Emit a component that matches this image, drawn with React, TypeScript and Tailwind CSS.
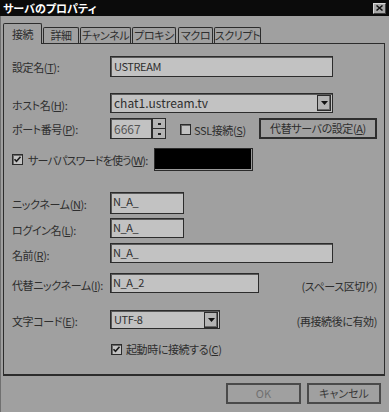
import React from "react";

const LBL = "text-[11px] leading-none text-[#2e2e2e] whitespace-nowrap tracking-[-0.4px]";

function Label({ children, className = "" }: { children: React.ReactNode; className?: string }) {
  return <div className={`${LBL} ${className}`}>{children}</div>;
}

function Check({ checked }: { checked?: boolean }) {
  return (
    <div className="w-[11px] h-[11px] shrink-0 bg-[#c2c2c2] border border-[#2c2c2c] shadow-[inset_1px_1px_0_#6a6a6a] flex items-center justify-center">
      {checked && (
        <svg width="9" height="9" viewBox="0 0 9 9">
          <path d="M1.5 4.2 L3.5 6.3 L7.5 1.8" stroke="#1a1a1a" strokeWidth="1.6" fill="none" />
        </svg>
      )}
    </div>
  );
}

function DropBtn() {
  return (
    <div className="w-[14px] h-[16px] shrink-0 bg-[#b4b4b4] border border-[#2c2c2c] shadow-[inset_-1px_-1px_0_#6a6a6a] flex items-center justify-center">
      <svg width="7" height="4" viewBox="0 0 7 4">
        <path d="M0 0 H7 L3.5 4 Z" fill="#111" />
      </svg>
    </div>
  );
}

export default function App() {
  return (
    <div className="w-[389px] h-[412px] bg-[#a0a0a0] overflow-hidden font-['Noto_Sans_CJK_JP',sans-serif] [font-feature-settings:'palt'] flex flex-col">
      {/* title bar */}
      <div className="h-[16px] bg-[#0b0b0b] flex items-center justify-between shrink-0">
        <span className="pl-[3px] text-[11px] font-bold text-white leading-none">サーバのプロパティ</span>
        <div className="mr-[3px] w-[13px] h-[11px] bg-[#a8a8a8] border border-[#d8d8d8] border-r-[#404040] border-b-[#404040] flex items-center justify-center">
          <svg width="7" height="6" viewBox="0 0 7 6">
            <path d="M0.5 0.5 L6.5 5.5 M6.5 0.5 L0.5 5.5" stroke="#111" strokeWidth="1.5" />
          </svg>
        </div>
      </div>

      {/* body */}
      <div className="flex-1 flex flex-col border-l border-[#707070] pl-[2px]">
        {/* tabs */}
        <div className="h-[27px] flex items-end shrink-0">
          <div className="relative z-10 mb-[-1px] w-[39px] h-[21px] bg-[#a0a0a0] border border-b-0 border-[#2c2c2c] rounded-t-[2px] flex items-end justify-center pb-[4px]">
            <span className={LBL}>接続</span>
          </div>
          <div className="ml-[1px] w-[36px] h-[16px] border border-b-0 border-[#2c2c2c] rounded-t-[2px] flex items-center justify-center">
            <span className={LBL}>詳細</span>
          </div>
          <div className="ml-[1px] w-[51px] h-[16px] border border-b-0 border-[#2c2c2c] rounded-t-[2px] flex items-center justify-center">
            <span className={LBL}>チャンネル</span>
          </div>
          <div className="ml-[1px] w-[44px] h-[16px] border border-b-0 border-[#2c2c2c] rounded-t-[2px] flex items-center justify-center">
            <span className={LBL}>プロキシ</span>
          </div>
          <div className="ml-[2px] w-[35px] h-[16px] border border-b-0 border-[#2c2c2c] rounded-t-[2px] flex items-center justify-center">
            <span className={LBL}>マクロ</span>
          </div>
          <div className="ml-[1px] w-[47px] h-[16px] border border-b-0 border-[#2c2c2c] rounded-t-[2px] flex items-center justify-center">
            <span className={LBL}>スクリプト</span>
          </div>
        </div>

        {/* panel */}
        <div className="w-[382px] h-[333px] shrink-0 border border-[#2c2c2c] border-b-2 flex flex-col pl-[8px] pr-[7px]">
          {/* 設定名 */}
          <div className="mt-[12px] h-[21px] flex items-center">
            <Label className="w-[98px] pt-[2px]">設定名(<u>T</u>):</Label>
            <div className="w-[223px] h-[21px] bg-[#c2c2c2] border border-[#2c2c2c] shadow-[inset_1px_1px_0_#5a5a5a] flex items-center pl-[3px]">
              <span className={LBL}>USTREAM</span>
            </div>
          </div>

          {/* ホスト名 */}
          <div className="mt-[16px] h-[20px] flex items-center">
            <Label className="w-[98px] pt-[4px]">ホスト名(<u>H</u>):</Label>
            <div className="w-[223px] h-[20px] bg-[#c2c2c2] border border-[#2c2c2c] shadow-[inset_1px_1px_0_#5a5a5a] flex items-center pl-[3px] pr-[1px]">
              <span className={`${LBL} flex-1 text-[12px] tracking-[0px]`}>chat1.ustream.tv</span>
              <DropBtn />
            </div>
          </div>

          {/* ポート番号 */}
          <div className="mt-[5px] h-[21px] flex items-center">
            <Label className="w-[98px] pt-[2px]">ポート番号(<u>P</u>):</Label>
            <div className="w-[42px] h-[21px] bg-[#c2c2c2] border border-[#2c2c2c] shadow-[inset_1px_1px_0_#5a5a5a] flex items-center pl-[3px]">
              <span className="text-[12px] leading-none text-[#555]">6667</span>
            </div>
            <div className="w-[14px] h-[21px] flex flex-col border border-[#2c2c2c] bg-[#2c2c2c] gap-[1px]">
              <div className="flex-1 bg-[#b4b4b4] flex items-center justify-center">
                <div className="w-[3px] h-[2px] bg-[#222]" />
              </div>
              <div className="flex-1 bg-[#b4b4b4] flex items-center justify-center">
                <div className="w-[3px] h-[2px] bg-[#222]" />
              </div>
            </div>
            <div className="ml-[14px] mt-[2px]">
              <Check />
            </div>
            <Label className="ml-[3px] pt-[3px]">SSL接続(<u>S</u>)</Label>
            <div className="ml-auto w-[118px] h-[21px] border-2 border-[#2e2e2e] bg-[#a0a0a0] flex items-center justify-center">
              <span className={LBL}>代替サーバの設定(<u>A</u>)</span>
            </div>
          </div>

          {/* パスワード */}
          <div className="mt-[9px] h-[23px] flex items-center">
            <Check checked />
            <Label className="ml-[5px] w-[126px] pt-[2px] tracking-[-0.8px]">サーバパスワードを使う(<u>W</u>):</Label>
            <div className="w-[99px] h-[23px] bg-black border border-[#2c2c2c] shadow-[inset_-1px_-1px_0_#9a9a9a]" />
          </div>

          {/* ニックネーム */}
          <div className="mt-[21px] h-[22px] flex items-center">
            <Label className="w-[98px] pt-[3px]">ニックネーム(<u>N</u>):</Label>
            <div className="w-[74px] h-[22px] bg-[#c2c2c2] border border-[#2c2c2c] shadow-[inset_1px_1px_0_#5a5a5a] flex items-start pt-[3px] pl-[2px]">
              <span className={LBL}>N_A_</span>
            </div>
          </div>

          {/* ログイン名 */}
          <div className="mt-[4px] h-[20px] flex items-center">
            <Label className="w-[98px] pt-[5px]">ログイン名(<u>L</u>):</Label>
            <div className="w-[74px] h-[20px] bg-[#c2c2c2] border border-[#2c2c2c] shadow-[inset_1px_1px_0_#5a5a5a] flex items-start pt-[3px] pl-[2px]">
              <span className={LBL}>N_A_</span>
            </div>
          </div>

          {/* 名前 */}
          <div className="mt-[5px] h-[20px] flex items-center">
            <Label className="w-[98px] pt-[4px]">名前(<u>R</u>):</Label>
            <div className="w-[223px] h-[20px] bg-[#c2c2c2] border border-[#2c2c2c] shadow-[inset_1px_1px_0_#5a5a5a] flex items-start pt-[3px] pl-[2px]">
              <span className={LBL}>N_A_</span>
            </div>
          </div>

          {/* 代替ニックネーム */}
          <div className="mt-[10px] h-[20px] flex items-center">
            <Label className="w-[98px] pt-[5px]">代替ニックネーム(<u>I</u>):</Label>
            <div className="w-[149px] h-[20px] bg-[#c2c2c2] border border-[#2c2c2c] shadow-[inset_1px_1px_0_#5a5a5a] flex items-start pt-[3px] pl-[2px]">
              <span className={LBL}>N_A_2</span>
            </div>
            <Label className="ml-auto pt-[6px]">(スペース区切り)</Label>
          </div>

          {/* 文字コード */}
          <div className="mt-[17px] h-[19px] flex items-center">
            <Label className="w-[98px] pt-[3px]">文字コード(<u>E</u>):</Label>
            <div className="w-[110px] h-[19px] bg-[#c2c2c2] border border-[#2c2c2c] shadow-[inset_1px_1px_0_#5a5a5a] flex items-center pl-[3px] pr-[1px]">
              <span className={`${LBL} flex-1`}>UTF-8</span>
              <DropBtn />
            </div>
            <Label className="ml-auto pt-[3px]">(再接続後に有効)</Label>
          </div>

          {/* 起動時に接続する */}
          <div className="mt-[14px] h-[12px] flex items-center pl-[99px]">
            <Check checked />
            <Label className="ml-[4px]">起動時に接続する(<u>C</u>)</Label>
          </div>
        </div>

        {/* buttons */}
        <div className="mt-[7px] flex justify-end gap-[6px] pr-[8px]">
          <div className="w-[75px] h-[21px] border-2 border-[#4a4a4a] flex items-center justify-center">
            <span className="text-[11px] leading-none text-[#707070]">OK</span>
          </div>
          <div className="w-[74px] h-[21px] border-2 border-[#4a4a4a] flex items-center justify-center">
            <span className="text-[11px] leading-none text-[#3a3a3a]">キャンセル</span>
          </div>
        </div>
      </div>
    </div>
  );
}
